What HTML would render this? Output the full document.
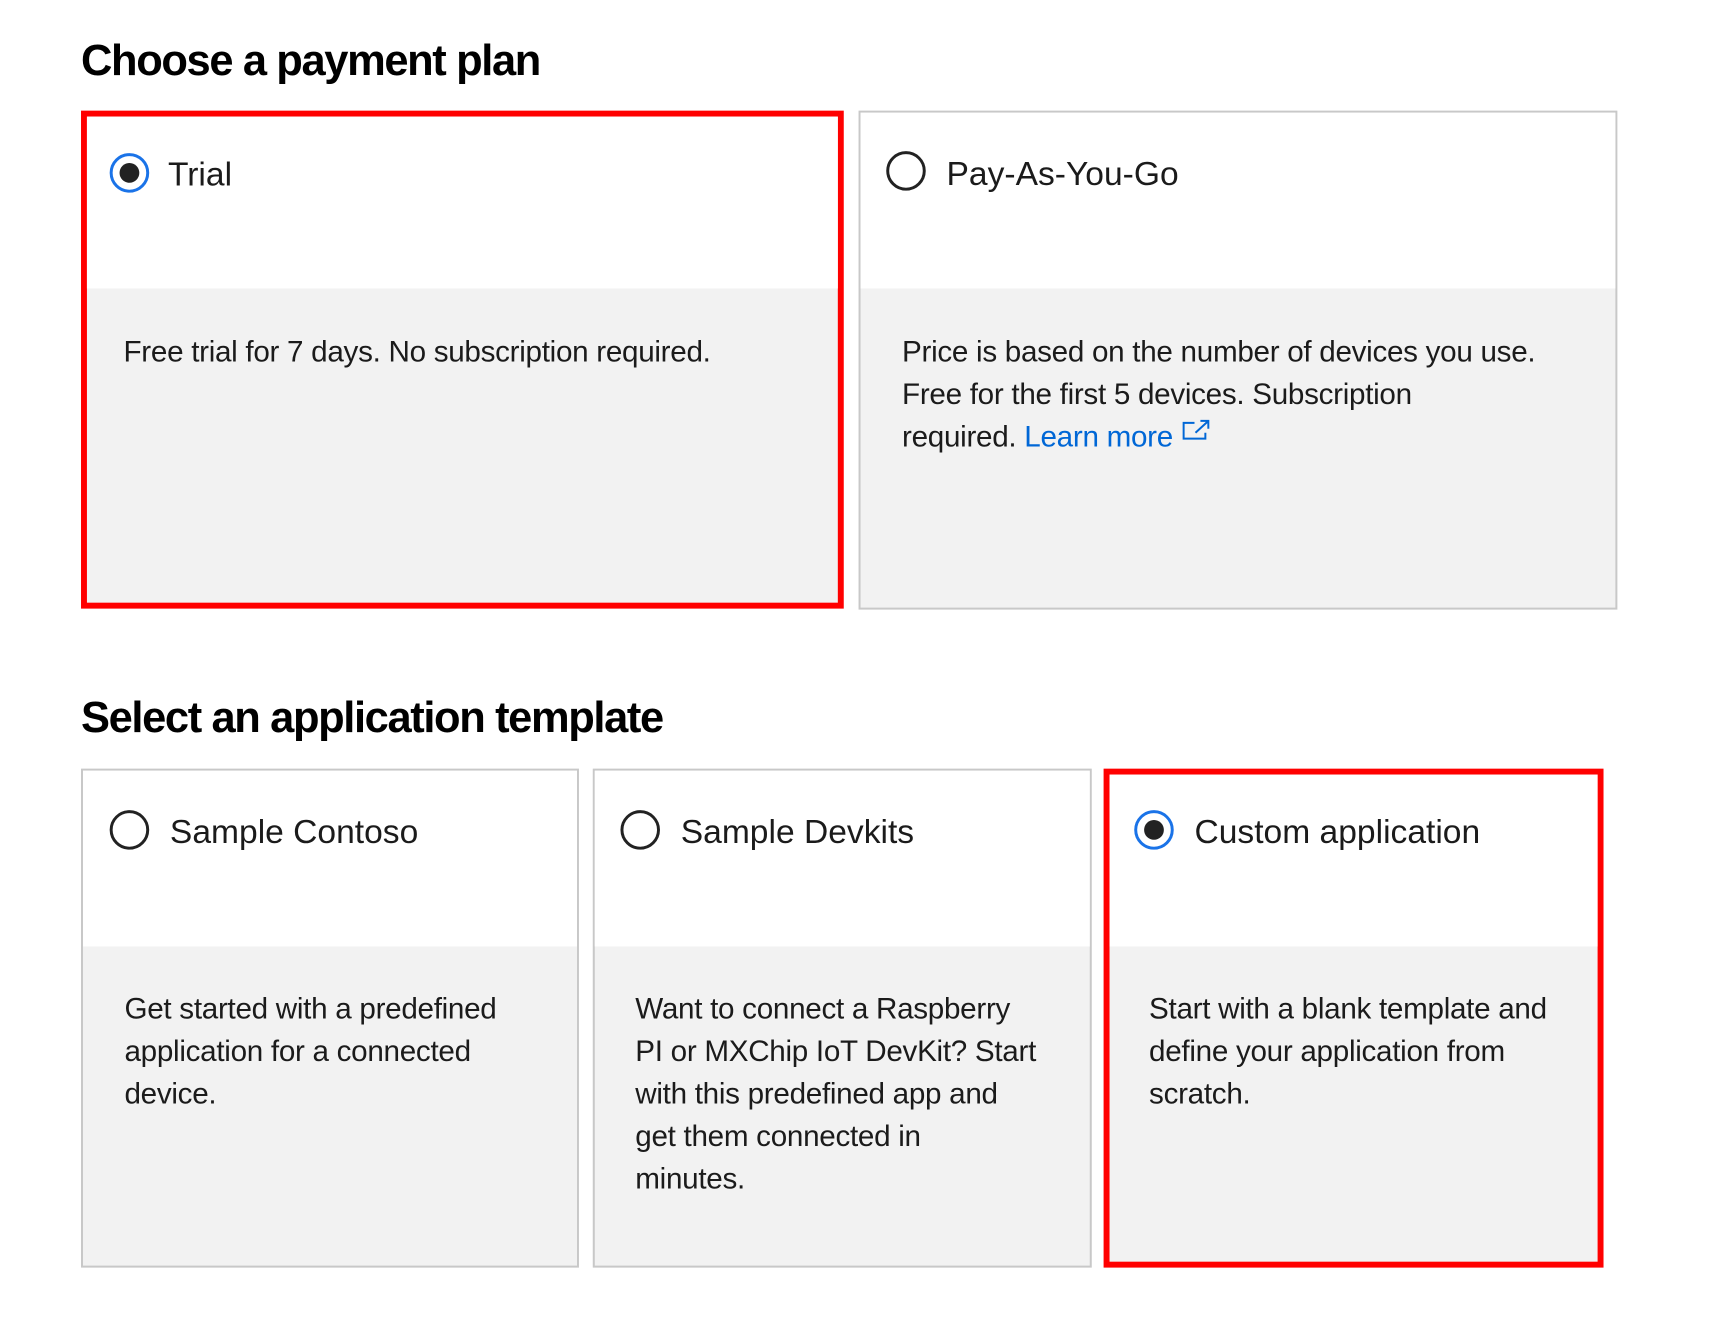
<!DOCTYPE html>
<html><head><style>
body{margin:0;width:1712px;height:1321px;background:#fff;font-family:"Liberation Sans",sans-serif;color:#1b1b1b;position:relative;overflow:hidden}
#w{position:absolute;left:0;top:0;width:1712px;height:1321px;transform:scale(0.988);transform-origin:0 0}
h2{position:absolute;margin:0;font-size:44px;font-weight:bold;letter-spacing:-1.4px;left:82px;color:#000}
.card{position:absolute;box-sizing:border-box;border:2px solid #c8c8c8;background:#f2f2f2}
.card.sel{border:6px solid #f00}
.top{position:absolute;left:0;right:0;top:0;background:#fff}
.radio{position:absolute;width:40px;height:40px;box-sizing:border-box;border:3px solid #222;border-radius:50%}
.sel .radio{border-color:#1a73e8}
.sel .radio::after{content:"";position:absolute;left:7px;top:7px;width:20px;height:20px;border-radius:50%;background:#222}
.lbl{position:absolute;font-size:34px;white-space:nowrap}
.desc{position:absolute;font-size:30px;line-height:43px;letter-spacing:-0.3px;white-space:nowrap}
a{color:#0067d6;text-decoration:none}
</style></head><body><div id="w">
<h2 style="top:37px">Choose a payment plan</h2>
<div class="card sel" style="left:82px;top:112px;width:772px;height:504px">
 <div class="top" style="height:174px"></div>
 <div class="radio" style="left:23px;top:37px"></div>
 <div class="lbl" style="left:82px;top:40px">Trial</div>
 <div class="desc" style="left:37px;top:217px">Free trial for 7 days. No subscription required.</div>
</div>
<div class="card" style="left:869px;top:112px;width:768px;height:505px">
 <div class="top" style="height:178px"></div>
 <div class="radio" style="left:26px;top:39px"></div>
 <div class="lbl" style="left:87px;top:43px">Pay-As-You-Go</div>
 <div class="desc" style="left:42px;top:221px">Price is based on the number of devices you use.<br>Free for the first 5 devices. Subscription<br>required. <a>Learn more <svg width="30" height="24" viewBox="0 0 30 24" style="vertical-align:4px"><path d="M14 4H3v16h22v-6" fill="none" stroke="#0067d6" stroke-width="2"/><path d="M15 14L27 3M20 2h8v8" fill="none" stroke="#0067d6" stroke-width="2"/></svg></a></div>
</div>
<h2 style="top:702px">Select an application template</h2>
<div class="card" style="left:82px;top:778px;width:504px;height:505px">
 <div class="top" style="height:178px"></div>
 <div class="radio" style="left:27px;top:40px"></div>
 <div class="lbl" style="left:88px;top:43px">Sample Contoso</div>
 <div class="desc" style="left:42px;top:220px">Get started with a predefined<br>application for a connected<br>device.</div>
</div>
<div class="card" style="left:600px;top:778px;width:505px;height:505px">
 <div class="top" style="height:178px"></div>
 <div class="radio" style="left:26px;top:40px"></div>
 <div class="lbl" style="left:87px;top:43px">Sample Devkits</div>
 <div class="desc" style="left:41px;top:220px">Want to connect a Raspberry<br>PI or MXChip IoT DevKit? Start<br>with this predefined app and<br>get them connected in<br>minutes.</div>
</div>
<div class="card sel" style="left:1117px;top:778px;width:506px;height:505px">
 <div class="top" style="height:174px"></div>
 <div class="radio" style="left:25px;top:36px"></div>
 <div class="lbl" style="left:86px;top:39px">Custom application</div>
 <div class="desc" style="left:40px;top:216px">Start with a blank template and<br>define your application from<br>scratch.</div>
</div>
</div></body></html>
